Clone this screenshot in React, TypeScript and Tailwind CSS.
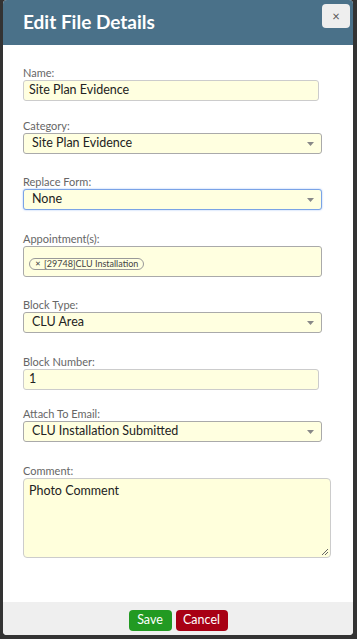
import { ReactNode } from 'react'

const font = { fontFamily: 'Lato, "Open Sans", sans-serif' }

function Label({ children }: { children: ReactNode }) {
  return <div className="text-[11px] leading-[13px] text-[#666] mb-[1px]">{children}</div>
}

function TextInput({ value }: { value: string }) {
  return (
    <div className="w-[296px] h-[21px] bg-[#ffffe0] border border-[#ccc] rounded-[3px] px-[5px] flex items-center text-[12.5px] text-[#222]">
      {value}
    </div>
  )
}

function Select({ value, focus }: { value: string; focus?: boolean }) {
  return (
    <div
      className={
        'w-[299px] h-[21px] bg-[#ffffe0] border rounded-[3px] pl-[8px] pr-[7px] flex items-center justify-between text-[12.5px] text-[#222] ' +
        (focus ? 'border-[#7aa3e6] shadow-[0_0_2px_#9cbef5]' : 'border-[#aaa]')
      }
    >
      <span>{value}</span>
      <svg width="7" height="4" viewBox="0 0 7 4">
        <path d="M0 0h7L3.5 4z" fill="#888" />
      </svg>
    </div>
  )
}

export default function App() {
  return (
    <div className="w-[357px] h-[639px] bg-[#333] overflow-hidden" style={font}>
      <div className="ml-[3px] w-[350px] h-[635px] bg-white rounded-[4px] overflow-hidden flex flex-col">
        {/* Header */}
        <div className="h-[45px] bg-[#4a7189] flex items-start justify-between pl-[20px] pr-[3px] shrink-0">
          <h1 className="text-white font-bold text-[19px] mt-[11px] leading-[22px]">Edit File Details</h1>
          <button className="mt-[4px] w-[28px] h-[24px] bg-[#eee] rounded-[4px] text-[#555] text-[13px] leading-none flex items-center justify-center">
            ×
          </button>
        </div>

        {/* Body */}
        <div className="flex-1 min-h-0 pl-[20px] pt-[21px]">
          <Label>Name:</Label>
          <TextInput value="Site Plan Evidence" />

          <div className="mt-[18px]">
            <Label>Category:</Label>
            <Select value="Site Plan Evidence" />
          </div>

          <div className="mt-[21px]">
            <Label>Replace Form:</Label>
            <Select value="None" focus />
          </div>

          <div className="mt-[22px]">
            <Label>Appointment(s):</Label>
            <div className="w-[299px] h-[31px] bg-[#ffffe0] border border-[#aaa] rounded-[3px] pl-[5px] pt-[1px]">
              <span className="inline-flex items-center h-[12px] px-[5px] border border-[#999] rounded-[6px] text-[9px] text-[#444] leading-none">
                <span className="mr-[3px] text-[7px]">✕</span>[29748]CLU Installation
              </span>
            </div>
          </div>

          <div className="mt-[21px]">
            <Label>Block Type:</Label>
            <Select value="CLU Area" />
          </div>

          <div className="mt-[22px]">
            <Label>Block Number:</Label>
            <TextInput value="1" />
          </div>

          <div className="mt-[17px]">
            <Label>Attach To Email:</Label>
            <Select value="CLU Installation Submitted" />
          </div>

          <div className="mt-[22px]">
            <Label>Comment:</Label>
            <div className="relative w-[308px] h-[80px] bg-[#ffffdc] border border-[#ccc] rounded-[4px] px-[5px] pt-[3px] text-[12.5px] text-[#222]">
              Photo Comment
              <svg className="absolute right-[1px] bottom-[1px]" width="9" height="9" viewBox="0 0 9 9">
                <path d="M8 2L2 8M8 5L5 8" stroke="#666" strokeWidth="1" />
              </svg>
            </div>
          </div>
        </div>

        {/* Footer */}
        <div className="h-[33px] bg-[#efefef] flex items-start justify-center gap-[4px] pt-[8px] shrink-0">
          <button className="w-[43px] h-[21px] bg-[#229a22] text-white text-[12.5px] rounded-[4px] leading-none">Save</button>
          <button className="w-[52px] h-[21px] bg-[#a80014] text-white text-[12.5px] rounded-[4px] leading-none">Cancel</button>
        </div>
      </div>
    </div>
  )
}
